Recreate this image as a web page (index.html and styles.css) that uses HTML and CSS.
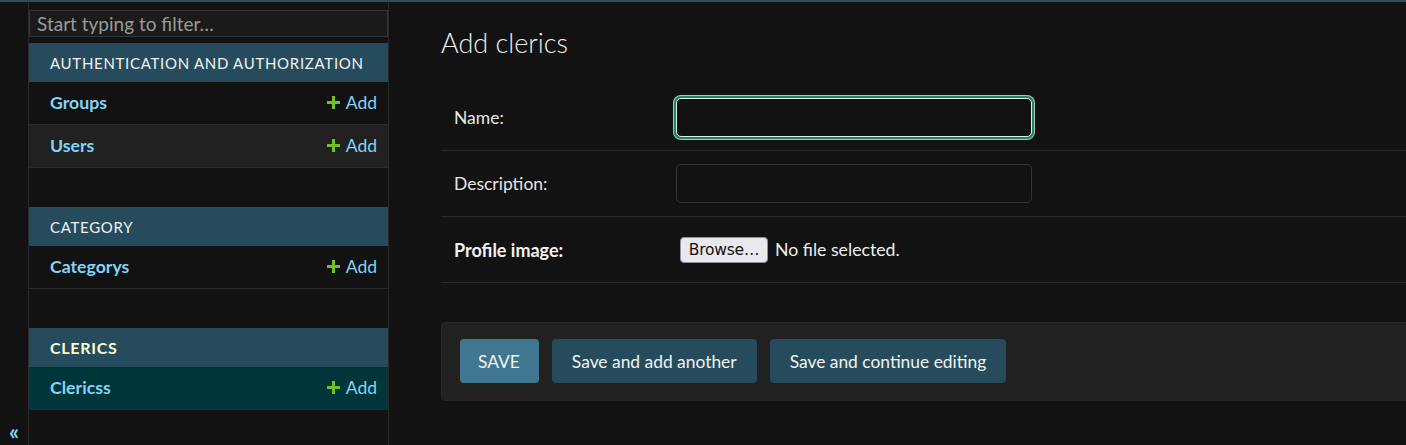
FILE: index.html
```html
<!DOCTYPE html>
<html lang="en">
<head>
<meta charset="utf-8">
<title>Add clerics</title>
<link rel="stylesheet" href="styles.css">
</head>
<body>
<div class="topbar"></div>
<div class="layout">
  <div class="toggle"><span class="toggle-glyph">«</span></div>
  <nav class="sidebar">
    <input class="filter" type="text" placeholder="Start typing to filter…">
    <div class="module">
      <div class="caption">AUTHENTICATION AND AUTHORIZATION</div>
      <div class="row"><span class="model">Groups</span><span class="add"><svg class="plus" viewBox="0 0 13 13"><path d="M5 0h3v5h5v3H8v5H5V8H0V5h5z"/></svg>Add</span></div>
      <div class="row alt"><span class="model">Users</span><span class="add"><svg class="plus" viewBox="0 0 13 13"><path d="M5 0h3v5h5v3H8v5H5V8H0V5h5z"/></svg>Add</span></div>
    </div>
    <div class="module">
      <div class="caption">CATEGORY</div>
      <div class="row"><span class="model">Categorys</span><span class="add"><svg class="plus" viewBox="0 0 13 13"><path d="M5 0h3v5h5v3H8v5H5V8H0V5h5z"/></svg>Add</span></div>
    </div>
    <div class="module">
      <div class="caption current">CLERICS</div>
      <div class="row selected"><span class="model">Clericss</span><span class="add"><svg class="plus" viewBox="0 0 13 13"><path d="M5 0h3v5h5v3H8v5H5V8H0V5h5z"/></svg>Add</span></div>
    </div>
  </nav>
  <main class="content">
    <h1 class="title">Add clerics</h1>
    <div class="form-row">
      <label class="label">Name:</label>
      <input class="field focused" type="text">
    </div>
    <div class="form-row">
      <label class="label">Description:</label>
      <input class="field" type="text">
    </div>
    <div class="form-row">
      <label class="label required">Profile image:</label>
      <div class="file"><span class="browse">Browse…</span><span class="nofile">No file selected.</span></div>
    </div>
    <div class="submit-row">
      <span class="btn default">SAVE</span>
      <span class="btn">Save and add another</span>
      <span class="btn">Save and continue editing</span>
    </div>
  </main>
</div>
</body>
</html>
```
FILE: styles.css
```css
html, body {
  margin: 0;
  padding: 0;
  background: #121212;
  color: #eeeeee;
  font-family: Lato, "Open Sans", sans-serif;
  overflow: hidden;
  height: 445px;
}
.topbar {
  height: 2px;
  background: #2b4d5e;
}
.layout {
  display: flex;
  height: 443px;
}
.toggle {
  width: 29px;
  flex-shrink: 0;
  border-right: 1px solid #2a2a2a;
  display: flex;
  flex-direction: column;
  justify-content: flex-end;
  align-items: center;
  padding-bottom: 3px;
  box-sizing: border-box;
}
.toggle-glyph {
  color: #81d4fa;
  font-size: 22px;
  line-height: 20px;
  font-weight: 700;
}
.sidebar {
  width: 359px;
  border-right: 1px solid #2a2a2a;
  padding-top: 8px;
  flex-shrink: 0;
}
.filter {
  display: block;
  box-sizing: border-box;
  width: 359px;
  height: 27px;
  margin: 0 0 6px 0;
  padding: 0 7px;
  background: #1b1b1b;
  border: 1px solid #353535;
  color: #eee;
  font-family: inherit;
  font-size: 19px;
  outline: none;
}
.filter::placeholder {
  color: #9a9a9a;
}
.module {
  margin-bottom: 39px;
}
.caption {
  height: 39px;
  box-sizing: border-box;
  background: #264b5d;
  color: #f2f2f2;
  font-size: 15px;
  letter-spacing: 0.7px;
  padding-left: 21px;
  display: flex;
  align-items: center;
}
.caption.current {
  color: #ffffcc;
  font-weight: 700;
  font-size: 16px;
}
.row {
  height: 43px;
  box-sizing: border-box;
  border-bottom: 1px solid #2a2a2a;
  display: flex;
  align-items: center;
  justify-content: space-between;
  padding: 0 11px 1px 21px;
}
.row.alt {
  background: #212121;
}
.row.selected {
  background: #00363a;
}
.model {
  color: #81d4fa;
  font-weight: 700;
  font-size: 17.7px;
}
.add {
  color: #81d4fa;
  font-size: 17.5px;
  display: flex;
  align-items: center;
}
.plus {
  width: 13px;
  height: 13px;
  fill: #70bf2b;
  margin-right: 6px;
}
.content {
  flex: 1;
  padding-left: 52px;
  min-width: 0;
}
.title {
  margin: 24px 0 25px 0;
  font-weight: 300;
  font-size: 27px;
  line-height: 34px;
  color: #eeeeee;
}
.form-row {
  display: flex;
  align-items: center;
  height: 66px;
  box-sizing: border-box;
  border-bottom: 1px solid #2a2a2a;
  padding-left: 13px;
  margin-right: -20px;
}
.label {
  width: 222px;
  flex-shrink: 0;
  font-size: 17.5px;
  color: #e6e6e6;
}
.label.required {
  font-weight: 700;
  font-size: 18px;
  color: #f2f2f2;
}
.field {
  box-sizing: border-box;
  width: 356px;
  height: 39px;
  background: #121212;
  border: 1px solid #353535;
  border-radius: 5px;
  color: #eee;
  outline: none;
  margin: 0;
}
.field.focused {
  border: 1px solid #e8e8e8;
  box-shadow: 0 0 0 2px #118a63, 0 0 0 3px #bdbdbd;
}
.file {
  display: flex;
  align-items: center;
  padding-left: 4px;
}
.browse {
  box-sizing: border-box;
  height: 26px;
  width: 88px;
  display: flex;
  align-items: center;
  justify-content: center;
  background: #e9e9ed;
  border: 1px solid #8f8f9d;
  border-radius: 4px;
  color: #111;
  font-family: "DejaVu Sans", sans-serif;
  font-size: 15.5px;
  letter-spacing: -0.2px;
}
.nofile {
  margin-left: 7px;
  font-size: 17.7px;
  color: #eeeeee;
}
.submit-row {
  margin-top: 39px;
  margin-right: -20px;
  background: #212121;
  border: 1px solid #272727;
  border-radius: 4px;
  padding: 16px 18px 17px 18px;
  display: flex;
  gap: 13px;
}
.btn {
  height: 44px;
  box-sizing: border-box;
  padding: 0 20px;
  display: flex;
  align-items: center;
  background: #264b5d;
  color: #f3f3f3;
  border-radius: 4px;
  font-size: 17.4px;
}
.btn.default {
  background: #417690;
  padding: 0 19px 0 18px;
}
```
